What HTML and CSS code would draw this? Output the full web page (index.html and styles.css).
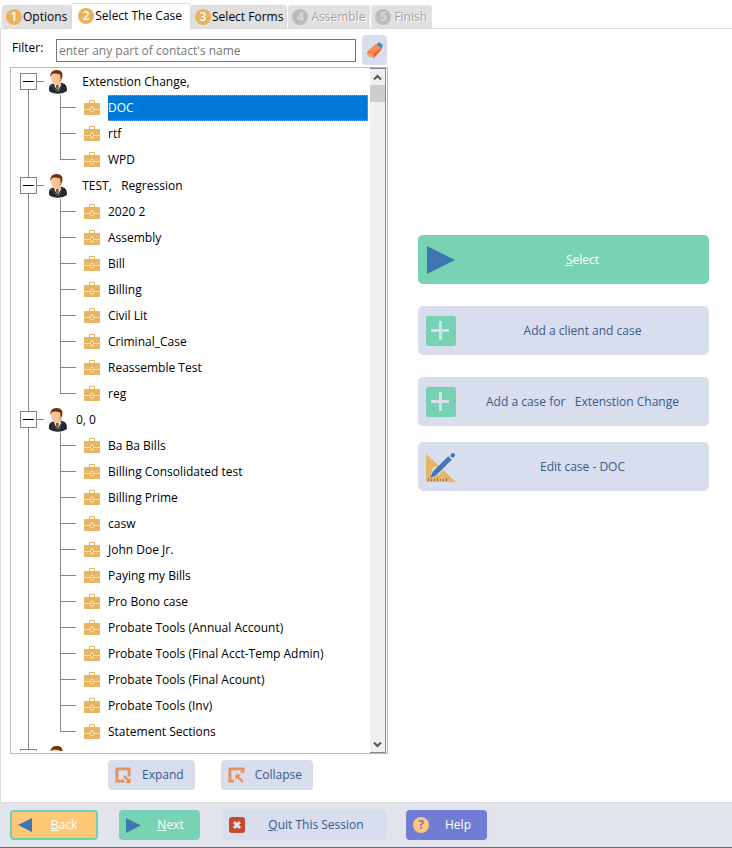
FILE: index.html
```html
<!DOCTYPE html>
<html lang="en">
<head>
<meta charset="utf-8">
<title>Select The Case</title>
<link rel="stylesheet" href="styles.css">
</head>
<body>
<svg class="defs" aria-hidden="true">
  <symbol id="person" viewBox="0 0 22 24">
    <path d="M2 21c0-4 0-6 3-7l5-2 5 1c4 1 5 3 5 8-4 3-13 4-18 0z" fill="#25282c"/>
    <path d="M7 13l6-1 1 3-3 6-3-4z" fill="#f4f1ee"/>
    <path d="M9 15l2-1 1 2-1 5-2-3z" fill="#8b5a25"/>
    <path d="M5 15l5 7M15 14l-3 8" stroke="#4b4f55" fill="none"/>
    <path d="M4 5c0-3 9-4 11 0 1 5-1 10-6 10C6 15 4 11 4 5z" fill="#f8c59a"/>
    <path d="M13 7h1.500c1 2 0 4-3 6z" fill="#e09a68"/>
    <path d="M3.500 7C3 3 5 0 9.500 0c5 0 7 3 5.500 8l-1 1-1-4.500C10 3.500 7 3 5 4z" fill="#742f0b"/>
  </symbol>
  <symbol id="case" viewBox="0 0 16 15">
    <path d="M5.500 3V.5h5V3" fill="none" stroke="#e8b25e"/>
    <rect y="3" width="16" height="12" rx="1" fill="#e8b564"/>
    <path d="M0 9.500h6m4 0h6" stroke="#f9dfb4" fill="none"/>
    <rect x="6.500" y="7" width="3" height="5" rx="1.500" fill="none" stroke="#f9e3bd"/>
  </symbol>
  <symbol id="play" viewBox="0 0 28 28"><path d="M0 0l28 14L0 28z" fill="#3e77b2"/></symbol>
  <symbol id="plus" viewBox="0 0 30 30">
    <rect width="30" height="30" rx="2" fill="#76d2b2"/>
    <path d="M14.500 5v19M5 14.500h18" stroke="#d8deed" stroke-width="3"/>
  </symbol>
</svg>
<main class="wizard">
  <nav class="tabs" aria-label="Steps">
    <button class="tab"><span class="num">1</span>Options</button>
    <button class="tab current" aria-current="step"><span class="num">2</span>Select The Case</button>
    <button class="tab"><span class="num">3</span>Select Forms</button>
    <button class="tab" disabled><span class="num">4</span>Assemble</button>
    <button class="tab" disabled><span class="num">5</span>Finish</button>
  </nav>
  <div class="page">
    <section class="picker">
      <div class="filter">
        <label for="filter">Filter:</label>
        <input id="filter" type="text" placeholder="enter any part of contact's name">
        <button class="soft clear" aria-label="Clear filter">
          <svg width="18" height="18" viewBox="0 0 18 18">
            <path d="M10 4l3-3 4 3-2 5z" fill="#279bd0"/>
            <path d="M1 11l9-8 5 4v2l-7 8-6-2z" fill="#f2622d"/>
            <path d="M2 10l8-7 5 4-8 6z" fill="#ff8a52"/>
            <path d="M1 11l6 2 1 4-6-2z" fill="#f79a76"/>
          </svg>
        </button>
      </div>
      <div class="listbox">
        <ul class="tree">
          <li class="contact">
            <div class="row"><button class="toggle" aria-label="Collapse contact"></button><svg class="person"><use href="#person"/></svg><span class="name">  Extenstion Change,</span></div>
            <ul class="cases">
              <li class="selected"><svg><use href="#case"/></svg><span>DOC</span></li>
              <li><svg><use href="#case"/></svg><span>rtf</span></li>
              <li><svg><use href="#case"/></svg><span>WPD</span></li>
            </ul>
          </li>
          <li class="contact">
            <div class="row"><button class="toggle" aria-label="Collapse contact"></button><svg class="person"><use href="#person"/></svg><span class="name">  TEST,   Regression</span></div>
            <ul class="cases">
              <li><svg><use href="#case"/></svg><span>2020 2</span></li>
              <li><svg><use href="#case"/></svg><span>Assembly</span></li>
              <li><svg><use href="#case"/></svg><span>Bill</span></li>
              <li><svg><use href="#case"/></svg><span>Billing</span></li>
              <li><svg><use href="#case"/></svg><span>Civil Lit</span></li>
              <li><svg><use href="#case"/></svg><span>Criminal_Case</span></li>
              <li><svg><use href="#case"/></svg><span>Reassemble Test</span></li>
              <li><svg><use href="#case"/></svg><span>reg</span></li>
            </ul>
          </li>
          <li class="contact">
            <div class="row"><button class="toggle" aria-label="Collapse contact"></button><svg class="person"><use href="#person"/></svg><span class="name">0, 0</span></div>
            <ul class="cases">
              <li><svg><use href="#case"/></svg><span>Ba Ba Bills</span></li>
              <li><svg><use href="#case"/></svg><span>Billing Consolidated test</span></li>
              <li><svg><use href="#case"/></svg><span>Billing Prime</span></li>
              <li><svg><use href="#case"/></svg><span>casw</span></li>
              <li><svg><use href="#case"/></svg><span>John Doe Jr.</span></li>
              <li><svg><use href="#case"/></svg><span>Paying my Bills</span></li>
              <li><svg><use href="#case"/></svg><span>Pro Bono case</span></li>
              <li><svg><use href="#case"/></svg><span>Probate Tools (Annual Account)</span></li>
              <li><svg><use href="#case"/></svg><span>Probate Tools (Final Acct-Temp Admin)</span></li>
              <li><svg><use href="#case"/></svg><span>Probate Tools (Final Acount)</span></li>
              <li><svg><use href="#case"/></svg><span>Probate Tools (Inv)</span></li>
              <li><svg><use href="#case"/></svg><span>Statement Sections</span></li>
            </ul>
          </li>
          <li class="contact peek">
            <div class="row"><button class="toggle" aria-label="Collapse contact"></button><svg class="person"><use href="#person"/></svg></div>
          </li>
        </ul>
        <div class="scrollbar">
          <button aria-label="Scroll up"><svg width="9" height="7" viewBox="0 0 9 7"><path d="M1 5.500l3.500-3.500 3.500 3.500"/></svg></button>
          <div class="thumb"></div>
          <button class="down" aria-label="Scroll down"><svg width="9" height="7" viewBox="0 0 9 7"><path d="M1 1.500l3.500 3.500 3.500-3.500"/></svg></button>
        </div>
      </div>
      <div class="treetools">
        <button class="soft"><svg width="17" height="17" viewBox="0 0 17 17"><path d="M10 13.500H2.500v-11h11V10" fill="none" stroke="#c3aca9" stroke-width="2"/><path d="M9 14.500H1.500v-13h13V9" fill="none" stroke="#f08a4b" stroke-width="2"/><path d="M9 9l5 5" stroke="#f08a4b" stroke-width="2"/><path d="M15.500 10.500v5.500H10z" fill="#f08a4b"/></svg><span>Expand</span></button>
        <button class="soft"><svg width="17" height="17" viewBox="0 0 17 17"><path d="M6 13.500H2.500v-11h11V6" fill="none" stroke="#c3aca9" stroke-width="2"/><path d="M6 14.500H1.500v-13h14V6" fill="none" stroke="#f08a4b" stroke-width="2"/><path d="M9 9l6 6" stroke="#f08a4b" stroke-width="2"/><path d="M7.500 13V7.500H13z" fill="#f08a4b"/></svg><span>Collapse</span></button>
      </div>
    </section>
    <section class="actions">
      <button class="primary"><svg class="arrow"><use href="#play"/></svg><span><u>S</u>elect</span></button>
      <button class="soft"><svg><use href="#plus"/></svg><span>Add a client and case</span></button>
      <button class="soft"><svg><use href="#plus"/></svg><span>Add a case for   Extenstion Change</span></button>
      <button class="soft edit"><svg viewBox="0 0 30 30"><path d="M0 2l30 28H0z" fill="#e8b564"/><path d="M2.500 29v-3M5.500 29v-2M8.500 29v-2M11.500 29v-3M14.500 29v-2M17.500 29v-2M20.500 29v-3" stroke="#7d7068"/><path d="M4 26l3-11 12 0-6 8z" fill="#d8deed"/><path d="M4 26l3-7 4 4z" fill="#3e77b2"/><path d="M9 21L24 6" stroke="#3e77b2" stroke-width="5"/><path d="M26.500 3.500l.5-.5" stroke="#3e77b2" stroke-width="4" stroke-linecap="round"/></svg><span>Edit case - DOC</span></button>
    </section>
  </div>
  <footer class="footer">
    <button class="back"><svg width="14" height="14" viewBox="0 0 14 14"><path d="M14 0v14L0 7z" fill="#3e77b2"/></svg><span><u>B</u>ack</span></button>
    <button class="primary next"><svg width="15" height="15"><use href="#play"/></svg><span><u>N</u>ext</span></button>
    <button class="soft quit"><svg width="16" height="16" viewBox="0 0 16 16"><rect width="16" height="16" rx="3" fill="#c9472f"/><path d="M5 5l6 6M11 5l-6 6" stroke="#e4e4f0" stroke-width="3"/></svg><span><u>Q</u>uit This Session</span></button>
    <button class="help"><span class="mark">?</span><span>Help</span></button>
  </footer>
</main>
</body>
</html>
```
FILE: styles.css
```css
* { box-sizing: border-box; }
body { margin: 0; background: #fff; color: #000; font: 12px/16px "Open Sans", "Noto Sans", sans-serif; }
button { font: inherit; border: 0; padding: 0; margin: 0; color: inherit; background: none; }
button svg { flex: none; }
ul { list-style: none; margin: 0; padding: 0; }
.defs { position: absolute; width: 0; height: 0; }
.wizard { min-height: 100vh; display: flex; flex-direction: column; border-bottom: 2px solid #6b6b70; }

.tabs { display: flex; align-items: flex-end; height: 29px; padding-left: 2px; position: relative; z-index: 1; }
.tab { display: flex; align-items: center; gap: 1px; height: 23px; padding: 0 3px; margin-bottom: 1px; margin-right: 1px; background: #e0e0e0; border: 1px solid #dcdcdc; border-bottom: 0; border-radius: 3px 3px 0 0; white-space: nowrap; }
.tab.current { height: 26px; padding: 0 8px 1px 6px; margin: 0 0 0 -1px; background: #fff; }
.num { width: 16px; height: 16px; border-radius: 50%; background: #e8b25e; color: #fff; font-weight: 600; text-align: center; }
.tab:disabled { gap: 3px; padding: 0 4px 0 3px; color: #a3a3a3; text-shadow: 1px 1px #fff; border-color: #e6e6e6; }
.tab:disabled .num { background: #bcbcbc; color: #dedede; text-shadow: none; }

.page { flex: 1; display: grid; grid-template-columns: minmax(0, 378fr) minmax(0, 291fr); gap: 30px; margin-top: -1px; padding: 6px 23px 0 9px; border: 1px solid #dcdcdc; border-width: 1px 0 1px 1px; }
.filter { display: flex; align-items: center; height: 30px; margin-bottom: 2px; padding-left: 2px; }
.filter label { width: 44px; padding-bottom: 4px; }
.filter input { flex: 1; min-width: 0; height: 23px; border: 1px solid #767676; border-radius: 0; padding: 0 2px; font: inherit; }
.filter input::placeholder { color: #767676; opacity: 1; }
.soft { display: flex; align-items: center; background: #d8deed; color: #38598b; border-radius: 4px; }
.clear { justify-content: center; width: 25px; height: 30px; margin: 0 1px 0 6px; }

.listbox { display: flex; height: 687px; border: 1px solid #b9b9b9; padding-right: 1px; }
.tree { flex: 1; min-width: 0; height: 683px; padding-top: 1px; overflow: hidden; }
.contact { position: relative; }
.contact::before { content: ""; position: absolute; left: 17px; top: 13px; bottom: -13px; border-left: 1px solid #848484; }
.peek::before { display: none; }
.row { display: flex; align-items: center; height: 26px; padding-left: 9px; position: relative; }
.toggle { flex: none; width: 17px; height: 17px; margin-bottom: 1px; border: 1px solid #848484; background: linear-gradient(#000, #000) center / 11px 1px no-repeat #fff; }
.row::after { content: ""; position: absolute; left: 26px; top: 12px; width: 7px; border-top: 1px solid #848484; }
.person { width: 22px; height: 24px; margin: 0 7px 0 10px; }
.name { white-space: pre; }
.cases li { display: flex; align-items: center; height: 26px; padding: 0 2px 0 73px; position: relative; }
.cases li::before { content: ""; position: absolute; left: 49px; top: 0; bottom: 0; border-left: 1px solid #848484; }
.cases li:last-child::before { bottom: 13px; }
.cases li::after { content: ""; position: absolute; left: 49px; top: 12px; width: 16px; border-top: 1px solid #848484; }
.cases svg { flex: none; width: 16px; height: 15px; margin: 0 8px 1px 0; }
.cases span { white-space: nowrap; }
.selected span { flex: 1; height: 26px; line-height: 24px; color: #fff; background: #0078d7; border: 1px dotted #ff8728; border-left-width: 0; }

.scrollbar { width: 16px; display: flex; flex-direction: column; background: #f0f0f0; border: 1px solid #85858f; border-left: 0; }
.scrollbar button { height: 16px; display: grid; place-items: center; }
.scrollbar path { fill: none; stroke: #555; stroke-width: 2; }
.thumb { height: 17px; background: #cdcdcd; }
.scrollbar .down { margin-top: auto; }
.treetools { display: flex; gap: 26px; padding: 6px 0 12px 98px; }
.treetools .soft { height: 30px; padding: 0 11px 0 7px; gap: 10px; }

.actions { display: flex; flex-direction: column; padding-top: 200px; }
.actions button { display: flex; align-items: center; height: 49px; padding: 0 0 0 8px; margin-bottom: 22px; border-radius: 5px; }
.actions svg { width: 30px; height: 30px; }
.actions .arrow { height: 28px; padding: 0 1px; }
.actions span { flex: 1; text-align: center; white-space: pre; }
.actions button:nth-child(3) { margin-bottom: 16px; }
.primary { background: #77d3b4; color: #fff; }

.footer { display: flex; align-items: center; height: 44px; padding-left: 10px; background: #e1e4ea; }
.footer button { display: flex; align-items: center; height: 30px; border-radius: 4px; }
.footer span { flex: 1; text-align: center; }
.footer .back { width: 88px; margin-right: 21px; padding: 0 0 0 6px; border: 2px solid #6fd1b0; background: #fdc877; color: #fff; }
.footer .next { width: 81px; margin-right: 22px; padding: 0 0 0 7px; }
.footer .quit { width: 165px; margin-right: 19px; padding: 0 0 0 7px; }
.footer .help { width: 81px; padding: 0 0 0 7px; background: #717dd5; color: #fff; }
.footer .mark { flex: none; width: 16px; height: 16px; border-radius: 50%; background: #fdc877; color: #717dd5; font-weight: 700; }
```
